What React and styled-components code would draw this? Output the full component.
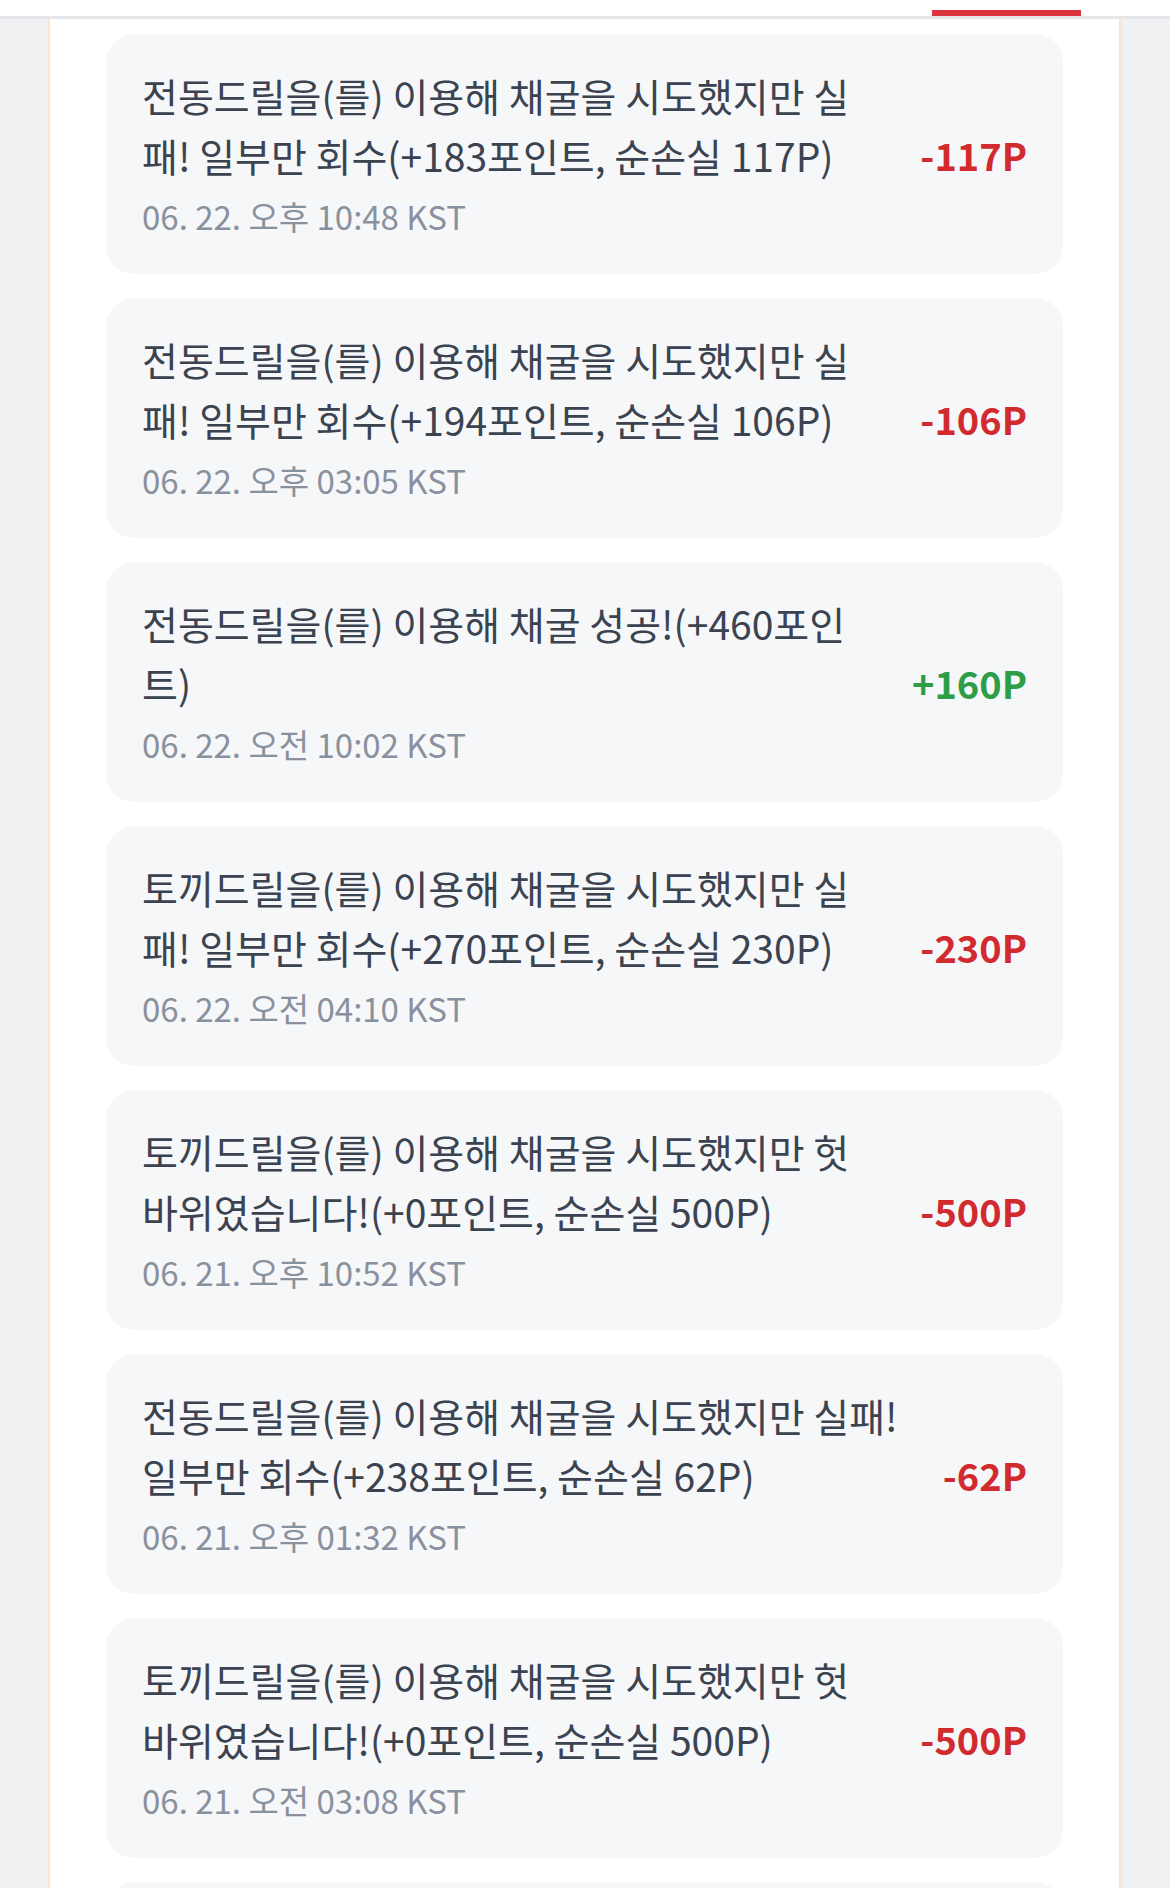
import React from "react";
import styled, { createGlobalStyle } from "styled-components";

const history = [
    { text: "전동드릴을(를) 이용해 채굴을 시도했지만 실패! 일부만 회수(+183포인트, 순손실 117P)", date: "06. 22. 오후 10:48 KST", amount: -117 },
    { text: "전동드릴을(를) 이용해 채굴을 시도했지만 실패! 일부만 회수(+194포인트, 순손실 106P)", date: "06. 22. 오후 03:05 KST", amount: -106 },
    { text: "전동드릴을(를) 이용해 채굴 성공!(+460포인트)", date: "06. 22. 오전 10:02 KST", amount: 160 },
    { text: "토끼드릴을(를) 이용해 채굴을 시도했지만 실패! 일부만 회수(+270포인트, 순손실 230P)", date: "06. 22. 오전 04:10 KST", amount: -230 },
    { text: "토끼드릴을(를) 이용해 채굴을 시도했지만 헛바위였습니다!(+0포인트, 순손실 500P)", date: "06. 21. 오후 10:52 KST", amount: -500 },
    { text: "전동드릴을(를) 이용해 채굴을 시도했지만 실패! 일부만 회수(+238포인트, 순손실 62P)", date: "06. 21. 오후 01:32 KST", amount: -62 },
    { text: "토끼드릴을(를) 이용해 채굴을 시도했지만 헛바위였습니다!(+0포인트, 순손실 500P)", date: "06. 21. 오전 03:08 KST", amount: -500 },
    { text: "토끼드릴을(를) 이용해 채굴을 시도했지만 실패! 일부만 회수(+210포인트, 순손실 290P)", date: "06. 20. 오후 11:41 KST", amount: -290 }
];

const formatAmount = n => (n > 0 ? `+${n}P` : `${n}P`);

const App = () => (
    <>
        <GlobalStyle />
        <TabBar>
            <TabIndicator />
        </TabBar>
        <Page>
            <Container>
                <List>
                    {history.map((item, i) => (
                        <Card key={`history-${i}`}>
                            <Info>
                                <Message>{item.text}</Message>
                                <Time>{item.date}</Time>
                            </Info>
                            <Amount positive={item.amount > 0}>{formatAmount(item.amount)}</Amount>
                        </Card>
                    ))}
                </List>
            </Container>
        </Page>
    </>
);

const GlobalStyle = createGlobalStyle`
    html, body {
        margin: 0;
        padding: 0;
        background: #f0f1f3;
        font-family: "Noto Sans CJK KR", "Noto Sans", sans-serif;
    }
    * {
        box-sizing: border-box;
    }
`;

const TabBar = styled.div`
    display: flex;
    justify-content: flex-end;
    align-items: flex-end;
    height: 19px;
    padding-right: 89px;
    background: #ffffff;
    border-bottom: 3px solid #e5e6ea;
`;

const TabIndicator = styled.div`
    width: 149px;
    height: 6px;
    background: #dc3540;
`;

const Page = styled.div`
    background: #f0f1f3;
    min-height: 1869px;
`;

const Container = styled.div`
    margin: 0 48px;
    min-height: 1869px;
    padding: 15px 56px 0;
    background: #ffffff;
    border-left: 2px solid #f8e5cd;
    border-right: 3px solid #f6e6d2;
`;

const List = styled.div`
    display: flex;
    flex-direction: column;
    gap: 24px;
`;

const Card = styled.div`
    display: flex;
    align-items: center;
    gap: 41px;
    height: 240px;
    padding: 26px 36px 30px 36px;
    background: #f6f7f9;
    border-radius: 28px;
`;

const Info = styled.div`
    flex: 1;
    min-width: 0;
    display: flex;
    flex-direction: column;
    gap: 7px;
`;

const Message = styled.div`
    font-size: 39px;
    line-height: 60px;
    color: #3c4350;
`;

const Time = styled.div`
    font-size: 33px;
    line-height: 48px;
    color: #8a919e;
`;

const Amount = styled.div`
    flex-shrink: 0;
    padding-top: 5px;
    font-size: 38px;
    font-weight: 700;
    color: ${p => (p.positive ? "#2e9d47" : "#d22b2f")};
`;

export default App;
